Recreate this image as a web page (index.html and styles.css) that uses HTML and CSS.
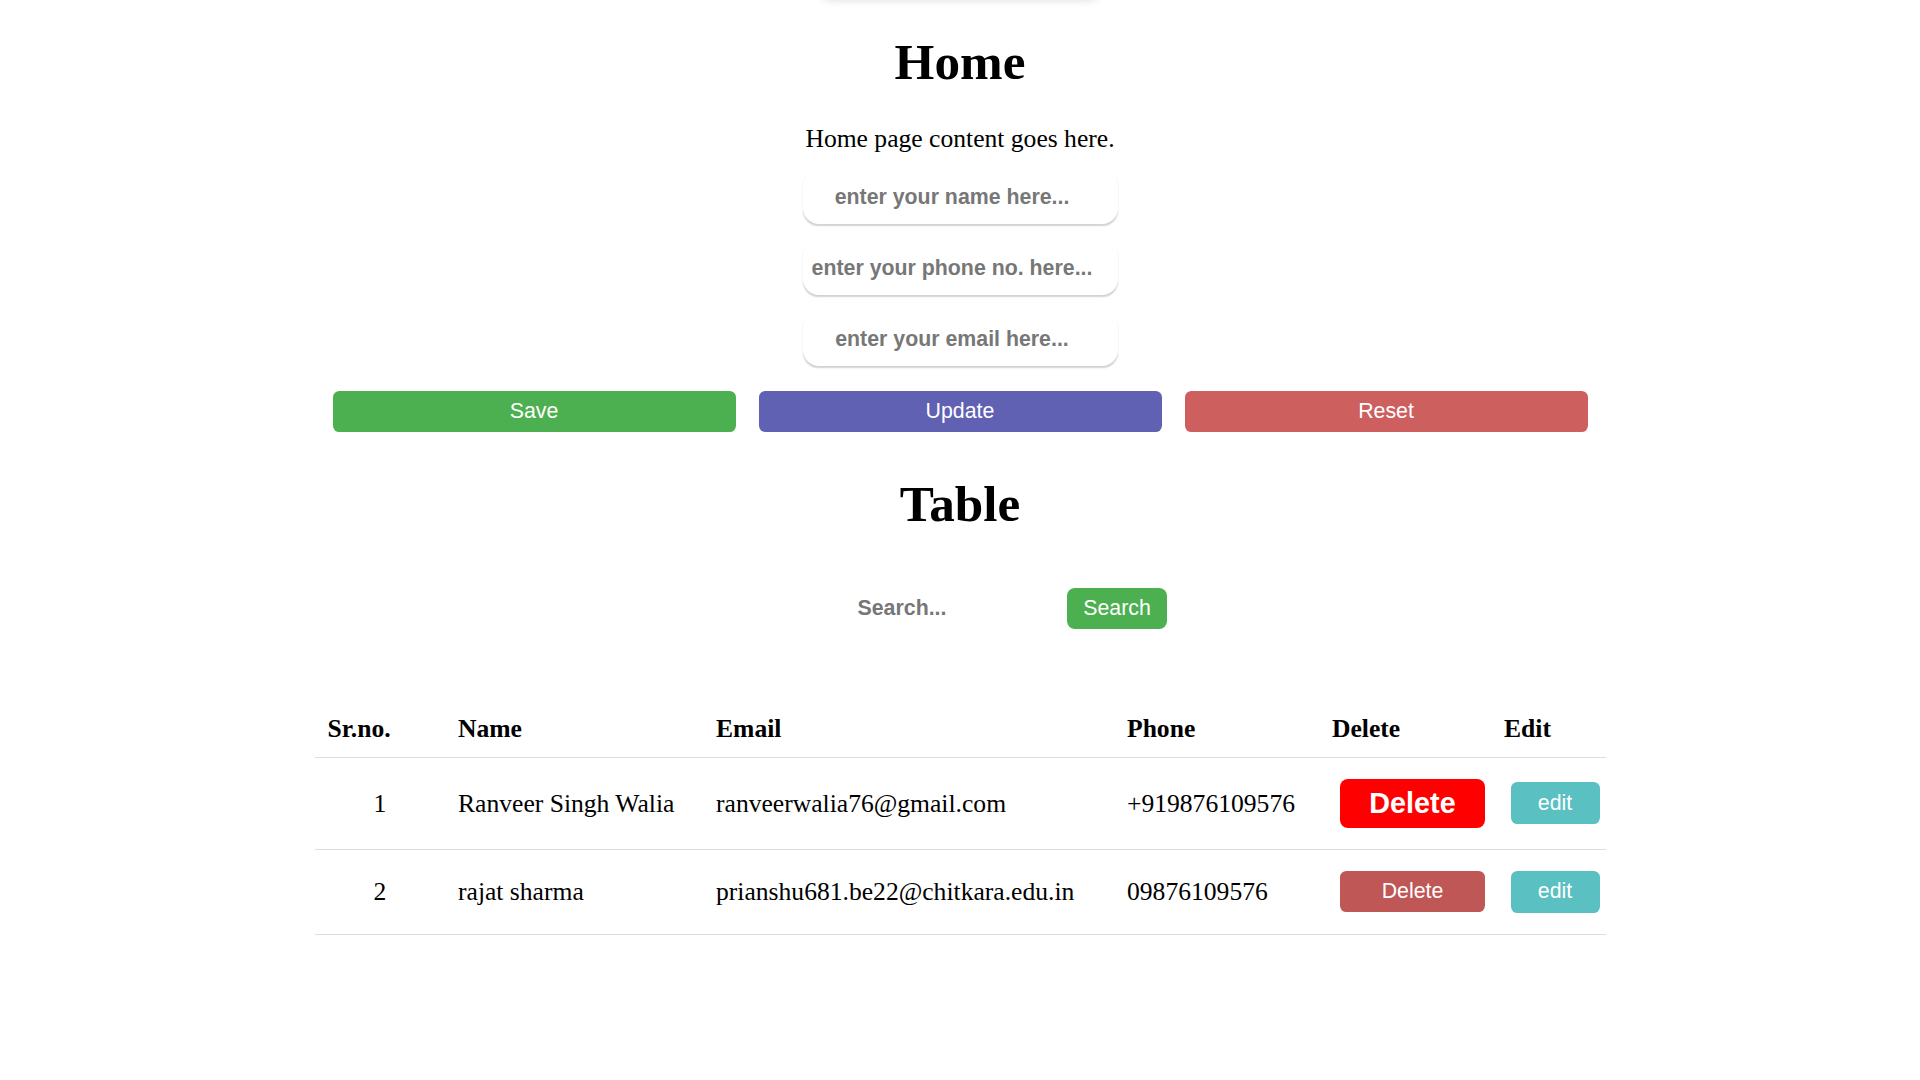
FILE: index.html
```html
<!DOCTYPE html>
<html lang="en">
<head>
<meta charset="utf-8">
<title>Home</title>
<link rel="stylesheet" href="styles.css">
</head>
<body>
<div class="page">
  <div class="topshade"></div>
  <h1 class="title home-title">Home</h1>
  <p class="lead">Home page content goes here.</p>
  <form class="form">
    <input class="field" type="text" placeholder="enter your name here...">
    <input class="field" type="text" placeholder="enter your phone no. here...">
    <input class="field" type="text" placeholder="enter your email here...">
    <div class="actions">
      <button type="button" class="btn btn-save">Save</button>
      <button type="button" class="btn btn-update">Update</button>
      <button type="button" class="btn btn-reset">Reset</button>
    </div>
  </form>
  <h1 class="title table-title">Table</h1>
  <div class="search">
    <input class="search-input" type="text" placeholder="Search...">
    <button type="button" class="search-btn">Search</button>
  </div>
  <table class="data">
    <colgroup>
      <col class="c-sr"><col class="c-name"><col class="c-email"><col class="c-phone"><col class="c-del"><col class="c-edit">
    </colgroup>
    <thead>
      <tr><th>Sr.no.</th><th>Name</th><th>Email</th><th>Phone</th><th>Delete</th><th>Edit</th></tr>
    </thead>
    <tbody>
      <tr>
        <td class="sr">1</td><td>Ranveer Singh Walia</td><td>ranveerwalia76@gmail.com</td><td>+919876109576</td>
        <td><button type="button" class="del del-hot">Delete</button></td>
        <td><button type="button" class="edit">edit</button></td>
      </tr>
      <tr>
        <td class="sr">2</td><td>rajat sharma</td><td>prianshu681.be22@chitkara.edu.in</td><td>09876109576</td>
        <td><button type="button" class="del">Delete</button></td>
        <td><button type="button" class="edit">edit</button></td>
      </tr>
    </tbody>
  </table>
</div>
</body>
</html>
```
FILE: styles.css
```css
html, body {
  margin: 0;
  padding: 0;
  background: #ffffff;
}
body {
  font-family: "Liberation Serif", "Times New Roman", serif;
  color: #000;
  overflow: hidden;
}
.page {
  display: flex;
  flex-direction: column;
  align-items: center;
  min-height: 1080px;
}
.topshade {
  width: 280px;
  height: 12px;
  margin-top: -12px;
  border-radius: 0 0 10px 10px;
  box-shadow: 0 0 9px rgba(0, 0, 0, 0.14);
}
.title {
  font-size: 51.2px;
  line-height: 60px;
  font-weight: bold;
  margin: 0;
}
.home-title {
  margin-top: 32px;
}
.lead {
  font-size: 25.6px;
  line-height: 30px;
  margin: 32px 0 0;
}
.form {
  display: flex;
  flex-direction: column;
  align-items: center;
  margin-top: 16px;
}
.field {
  width: 315px;
  height: 54px;
  box-sizing: border-box;
  border: none;
  outline: none;
  border-radius: 16px;
  box-shadow: 0 2px 1.5px -0.5px rgba(0, 0, 0, 0.18);
  background: #fff;
  text-align: center;
  font-family: "Liberation Sans", Arial, sans-serif;
  font-size: 21.33px;
  font-weight: bold;
  margin-bottom: 17px;
  padding: 0 16px 0 0;
}
.field::placeholder,
.search-input::placeholder {
  color: #777777;
  font-weight: bold;
  opacity: 1;
}
.actions {
  display: flex;
  gap: 23px;
  margin-top: 8px;
}
.btn {
  width: 403px;
  height: 41px;
  border: none;
  border-radius: 6.4px;
  color: #fff;
  font-family: "Liberation Sans", Arial, sans-serif;
  font-size: 21.33px;
  padding: 0;
}
.btn-save { background: #4caf50; }
.btn-update { background: #6161b3; }
.btn-reset { background: #cd5f5f; }
.table-title {
  margin-top: 42px;
}
.search {
  display: flex;
  align-items: center;
  gap: 16px;
  margin-top: 54px;
}
.search-input {
  width: 298px;
  height: 40px;
  box-sizing: border-box;
  border: none;
  outline: none;
  background: transparent;
  text-align: center;
  font-family: "Liberation Sans", Arial, sans-serif;
  font-size: 21.33px;
  font-weight: bold;
  padding: 0;
}
.search-btn {
  width: 100px;
  height: 40.5px;
  border: none;
  border-radius: 8px;
  background: #4caf50;
  color: #fff;
  font-family: "Liberation Sans", Arial, sans-serif;
  font-size: 21.33px;
  padding: 0;
}
.data {
  margin-top: 73px;
  width: 1291px;
  table-layout: fixed;
  border-collapse: collapse;
  font-size: 25.6px;
}
.c-sr { width: 130.5px; }
.c-name { width: 258px; }
.c-email { width: 411px; }
.c-phone { width: 205px; }
.c-del { width: 172px; }
.c-edit { width: 114.5px; }
.data th,
.data td {
  padding: 12.8px 12.8px 12.8px 13px;
  text-align: left;
  vertical-align: middle;
  line-height: 29.5px;
  border-bottom: 1px solid #dddddd;
  white-space: nowrap;
  overflow: visible;
}
.data th {
  font-weight: bold;
}
.data td.sr {
  text-align: center;
}
.del,
.edit {
  display: block;
  border: none;
  color: #fff;
  font-family: "Liberation Sans", Arial, sans-serif;
  font-size: 21.33px;
  padding: 0;
  border-radius: 6.4px;
}
.del {
  width: 145px;
  height: 41px;
  margin: 8.5px 0 8.5px 8px;
  background: #bf5757;
}
.del-hot {
  height: 49px;
  background: #ff0000;
  font-size: 28.8px;
  font-weight: bold;
  border-radius: 8px;
}
.edit {
  width: 89px;
  height: 42px;
  margin: 8px 0 8px 6.5px;
  background: #5bc0c2;
}
```
